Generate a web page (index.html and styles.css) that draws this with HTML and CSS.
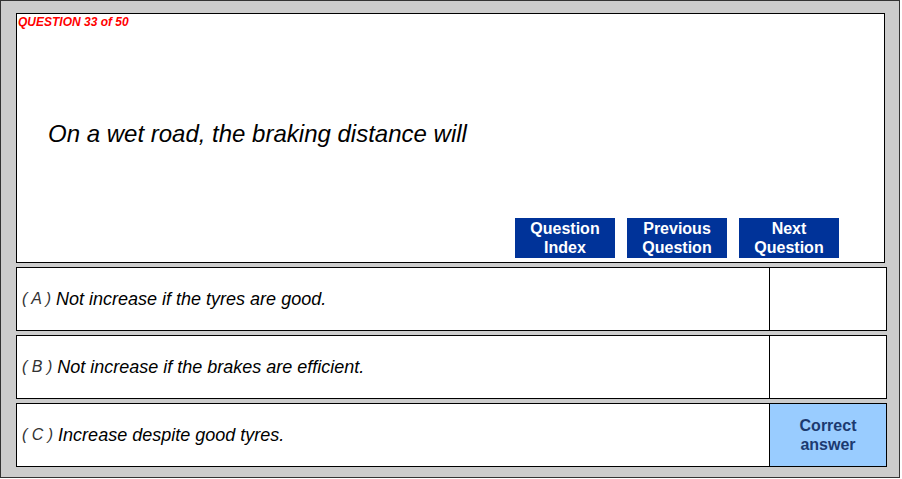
FILE: index.html
```html
<!DOCTYPE html>
<html lang="en">
<head>
    <meta charset="UTF-8">
    <title>Question 33 of 50</title>
    <link rel="stylesheet" href="styles.css">
</head>
<body>
    <div class="frame">
        <div class="question-box">
            <div class="question-count">QUESTION 33 of 50</div>
            <div class="question-text">On a wet road, the braking distance will</div>
            <div class="nav-row">
                <button class="nav-btn">Question<br>Index</button>
                <button class="nav-btn">Previous<br>Question</button>
                <button class="nav-btn">Next<br>Question</button>
            </div>
        </div>
        <div class="answer">
            <div class="answer-text"><span class="letter">( A )</span> Not increase if the tyres are good.</div>
            <div class="answer-mark"></div>
        </div>
        <div class="answer">
            <div class="answer-text"><span class="letter">( B )</span> Not increase if the brakes are efficient.</div>
            <div class="answer-mark"></div>
        </div>
        <div class="answer">
            <div class="answer-text"><span class="letter">( C )</span> Increase despite good tyres.</div>
            <div class="answer-mark correct">Correct<br>answer</div>
        </div>
    </div>
</body>
</html>
```

FILE: styles.css
```css
html, body {
    margin: 0;
    padding: 0;
    background: #fff;
}
body {
    font-family: "Liberation Sans", Arial, sans-serif;
}
.frame {
    width: 900px;
    height: 478px;
    box-sizing: border-box;
    border: 1px solid #333;
    background: #cccccc;
    padding: 12px 14px 0 15px;
}
.question-box {
    width: 869px;
    height: 250px;
    box-sizing: border-box;
    border: 1px solid #000;
    background: #fff;
    display: flex;
    flex-direction: column;
}
.question-count {
    color: #ff0000;
    font-size: 12px;
    font-weight: bold;
    font-style: italic;
    padding: 1px 0 0 1px;
    line-height: 14px;
}
.question-text {
    font-size: 24px;
    font-style: italic;
    color: #000;
    margin: 91px 0 0 31px;
    line-height: 28px;
}
.nav-row {
    margin-top: auto;
    display: flex;
    justify-content: flex-end;
    gap: 12px;
    padding: 0 45px 4px 0;
}
.nav-btn {
    width: 100px;
    height: 40px;
    margin: 0;
    padding: 0;
    border: none;
    background: #003399;
    color: #fff;
    font-family: "Liberation Sans", Arial, sans-serif;
    font-size: 16px;
    font-weight: bold;
    line-height: 19px;
}
.answer {
    width: 871px;
    height: 64px;
    box-sizing: border-box;
    border: 1px solid #000;
    background: #fff;
    margin-top: 4px;
    display: flex;
}
.answer-text {
    flex: 1;
    display: flex;
    align-items: center;
    gap: 5px;
    padding-left: 5px;
    font-size: 18px;
    font-style: italic;
    color: #000;
}
.letter {
    color: #333;
    font-size: 16px;
}
.answer-mark {
    width: 116px;
    border-left: 1px solid #000;
    display: flex;
    align-items: center;
    justify-content: center;
    text-align: center;
}
.answer-mark.correct {
    background: #99ccff;
    color: #1c3a70;
    font-size: 16px;
    font-weight: bold;
    line-height: 19px;
}
```
